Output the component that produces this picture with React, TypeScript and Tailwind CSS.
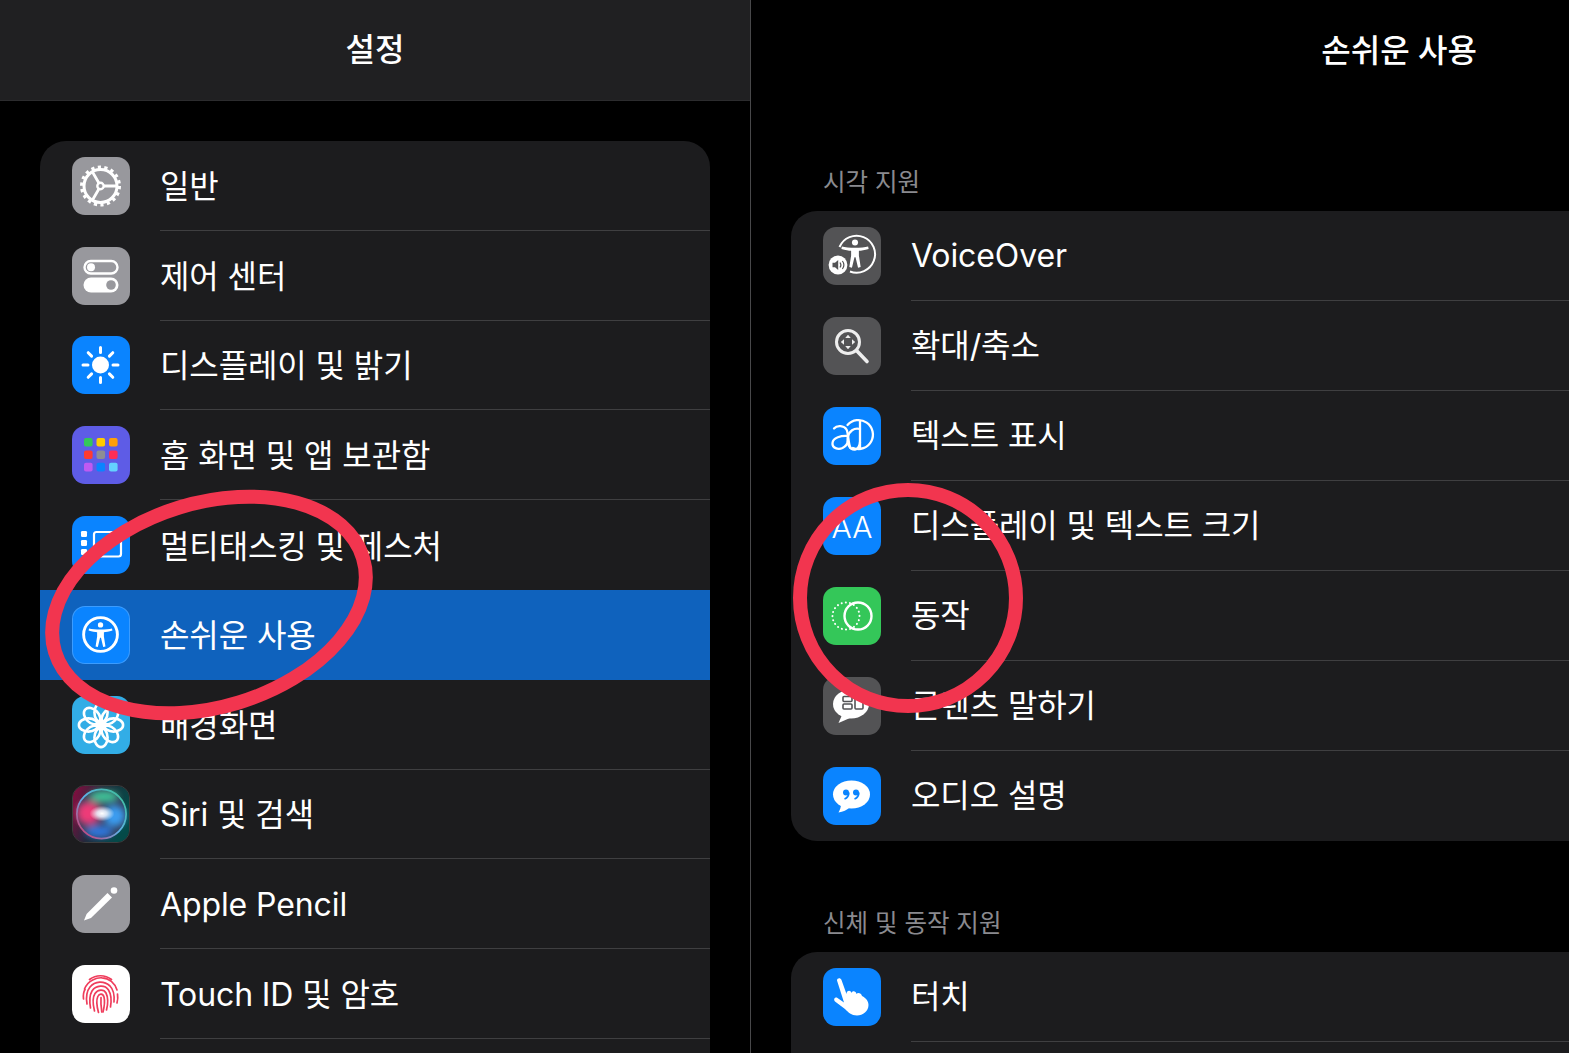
import type { ReactNode } from "react";

const KR = "font-['Inter','Noto_Sans_CJK_KR',sans-serif]";

function Tile({ bg, children, ring }: { bg: string; children: ReactNode; ring?: boolean }) {
  return (
    <div className={`w-[58px] h-[58px] rounded-[13px] overflow-hidden shrink-0 ${bg} ${ring ? "border border-white/20" : ""}`}>
      <svg viewBox="0 0 58 58" className="w-full h-full block">{children}</svg>
    </div>
  );
}

function Person({ x = 29, y = 29, s = 1 }: { x?: number; y?: number; s?: number }) {
  return (
    <g transform={`translate(${x} ${y}) scale(${s})`} fill="#fff">
      <circle cx="0" cy="-11" r="2.9" />
      <path d="M-12.5 -7.2 C-7 -5.6 7 -5.6 12.5 -7.2 L13 -4.8 C9 -3.6 6 -3.2 3.7 -3 L3.7 1.5 L5.4 12.5 L2.9 13 L0.5 3 L-0.5 3 L-2.9 13 L-5.4 12.5 L-3.7 1.5 L-3.7 -3 C-6 -3.2 -9 -3.6 -13 -4.8 Z" />
    </g>
  );
}

const GeneralIcon = () => (
  <Tile bg="bg-[#98989d]">
    <circle cx="28.5" cy="29" r="16.5" fill="none" stroke="#fff" strokeWidth="3" />
    <circle cx="28.5" cy="29" r="18.8" fill="none" stroke="#fff" strokeWidth="3.4" strokeDasharray="3.2 3.36" />
    <circle cx="28.5" cy="29" r="3.2" fill="none" stroke="#fff" strokeWidth="2.4" />
    <path d="M31.7 29H45M27 26.2 20.5 15M27 31.8 20.5 43" stroke="#fff" strokeWidth="2.8" fill="none" />
  </Tile>
);

const ControlIcon = () => (
  <Tile bg="bg-[#98989d]">
    <rect x="12.5" y="14" width="33" height="12.5" rx="6.25" fill="none" stroke="#fff" strokeWidth="2.4" />
    <circle cx="19" cy="20.2" r="4" fill="#fff" />
    <rect x="11.5" y="30.5" width="35" height="15" rx="7.5" fill="#fff" />
    <circle cx="39" cy="38" r="4.8" fill="#98989d" />
  </Tile>
);

const DisplayIcon = () => (
  <Tile bg="bg-[#0a84ff]">
    <circle cx="28.5" cy="29" r="8.5" fill="#fff" />
    <path
      d="M28.5 11.5v5M28.5 41.5v5M11 29h5M41 29h5M16.2 16.7l3.4 3.4M37.4 37.9l3.4 3.4M16.2 41.3l3.4-3.4M37.4 20.1l3.4-3.4"
      stroke="#fff"
      strokeWidth="3"
      strokeLinecap="round"
    />
  </Tile>
);

const HomeIcon = () => {
  const colors = ["#34c759", "#ffcc00", "#ff9f0a", "#ff3b30", "#8e8e93", "#ff2d55", "#bf5af2", "#0a84ff", "#64d2ff"];
  return (
    <Tile bg="bg-[#5e5ce6]">
      {colors.map((c, i) => (
        <rect key={c} x={12 + (i % 3) * 12.5} y={12 + Math.floor(i / 3) * 12.4} width="8.6" height="8.6" rx="2" fill={c} />
      ))}
    </Tile>
  );
};

const MultitaskIcon = () => (
  <Tile bg="bg-[#0a84ff]">
    <rect x="9" y="15" width="6" height="6" rx="1.2" fill="#fff" />
    <rect x="9" y="24" width="6" height="6" rx="1.2" fill="#fff" />
    <rect x="9" y="33" width="6" height="6" rx="1.2" fill="#fff" />
    <rect x="22" y="16" width="27" height="24.5" rx="2.5" fill="none" stroke="#fff" strokeWidth="2.2" />
  </Tile>
);

const AccessIcon = () => (
  <Tile bg="bg-[#0a84ff]" ring>
    <circle cx="28.5" cy="28.5" r="17.5" fill="none" stroke="#fff" strokeWidth="3" />
    <Person x={28.5} y={29} s={0.95} />
  </Tile>
);

const WallpaperIcon = () => (
  <Tile bg="bg-[#32ade6]">
    {[0, 45, 90, 135, 180, 225, 270, 315].map((a) => (
      <ellipse key={a} cx="29" cy="16.5" rx="6.6" ry="9.6" fill="none" stroke="#fff" strokeWidth="2.6" transform={`rotate(${a} 29 29)`} />
    ))}
    <circle cx="29" cy="29" r="3" fill="#fff" />
  </Tile>
);

const SiriIcon = () => (
  <div className="w-[58px] h-[58px] rounded-[13px] overflow-hidden shrink-0 border border-white/15">
    <svg viewBox="0 0 58 58" className="w-full h-full block">
      <defs>
        <linearGradient id="siriBg" x1="0" y1="0" x2="1" y2="0.35">
          <stop offset="0" stopColor="#8a0c40" />
          <stop offset="0.5" stopColor="#23283a" />
          <stop offset="1" stopColor="#044a48" />
        </linearGradient>
        <linearGradient id="siriRing" x1="0" y1="1" x2="1" y2="0">
          <stop offset="0" stopColor="#e0285f" />
          <stop offset="0.5" stopColor="#5fb0e8" />
          <stop offset="1" stopColor="#39c28f" />
        </linearGradient>
        <radialGradient id="siriGlow">
          <stop offset="0" stopColor="#fff" />
          <stop offset="0.4" stopColor="#eef6ff" stopOpacity="0.85" />
          <stop offset="1" stopColor="#fff" stopOpacity="0" />
        </radialGradient>
        <filter id="siriBlur"><feGaussianBlur stdDeviation="4" /></filter>
      </defs>
      <rect width="58" height="58" fill="url(#siriBg)" />
      <circle cx="29.5" cy="29" r="26" fill="#33405c" />
      <g filter="url(#siriBlur)">
        <ellipse cx="16" cy="28" rx="12" ry="12" fill="#ee3a78" />
        <ellipse cx="43" cy="31" rx="11" ry="11" fill="#3a9cf0" />
        <ellipse cx="32" cy="11" rx="15" ry="6" fill="#3fc498" />
        <ellipse cx="27" cy="47" rx="14" ry="6" fill="#2f78e0" />
      </g>
      <circle cx="29.5" cy="29" r="25.5" fill="none" stroke="url(#siriRing)" strokeWidth="1.8" />
      <ellipse cx="30" cy="28.5" rx="13" ry="8" fill="url(#siriGlow)" />
    </svg>
  </div>
);

const PencilIcon = () => (
  <Tile bg="bg-[#98989d]">
    <path d="M12 45.5 14.6 39 35.5 18 40 22.5 19 43Z" fill="#fff" />
    <circle cx="42" cy="15.5" r="3.3" fill="#fff" />
  </Tile>
);

const TouchIdIcon = () => (
  <Tile bg="bg-white">
    <g fill="none" stroke="#ef3d5c" strokeWidth="1.7" strokeLinecap="round" transform="translate(0 1)">
      <path d="M17.5 13.5C24 8.5 33 8.5 39.5 13.5" />
      <path d="M12.5 23C16 14 25 11.5 30 11.8 37 12 43 17 45 24" />
      <path d="M11.5 33C11 29 11.5 26 13 23.5M45.5 28C46 31 45.8 34 45 37" />
      <path d="M15 38C14 32 14 26 18 21 23 15 32 14.5 38 20 42 24 42.5 30 42 36" />
      <path d="M18.5 42C17.5 36 17 30 20 25 24 19 33 18.5 36.5 24 39 28 39.5 35 38.5 41" />
      <path d="M22.5 45C21 39 20 32 23 27.5 26 23 32 23 34 27 36 31 36 38 34.5 44" />
      <path d="M26.5 46.5C25 41 23.8 35 25.8 30.5 27.5 27 31 27.5 32 31 33 35 32.5 40 31 46" />
      <path d="M29 31.5C28.6 37 29 41 29.8 46" />
    </g>
  </Tile>
);

const VoiceOverIcon = () => (
  <Tile bg="bg-[#535355]">
    <path d="M16.5 20A18.5 18.5 0 1 1 27 44.5" fill="none" stroke="#fff" strokeWidth="2" />
    <Person x={32} y={27} s={1.05} />
    <circle cx="15" cy="38" r="9.4" fill="#fff" />
    <path d="M9.5 35.8h2.5l3.2-2.8v10l-3.2-2.8H9.5Z" fill="#535355" />
    <path d="M17 35.5c1.1 1.5 1.1 3.5 0 5M19.4 34c1.8 2.4 1.8 5.6 0 8" fill="none" stroke="#535355" strokeWidth="1.2" />
  </Tile>
);

const ZoomIcon = () => (
  <Tile bg="bg-[#535355]">
    <circle cx="25" cy="25" r="11.5" fill="none" stroke="#eee" strokeWidth="3" />
    <path d="M33.5 33.5 44 44.5" stroke="#eee" strokeWidth="3.6" strokeLinecap="round" />
    <path d="M25 17.8l2.8 3.2h-5.6ZM25 32.2l2.8-3.2h-5.6ZM17.8 25l3.2-2.8v5.6ZM32.2 25l-3.2-2.8v5.6Z" fill="#eee" />
  </Tile>
);

const TextIcon = () => (
  <Tile bg="bg-[#0a84ff]">
    <g fill="none" stroke="#fff" strokeWidth="2.3" strokeLinecap="round">
      <path d="M24.5 18A14.5 14.5 0 1 1 30 41" />
      <path d="M37 14V42" />
      <path d="M37 22C31 20.5 26 24 24.8 30 23.6 37 27 43 32 42.5 35 42 37 38.5 37 35" />
      <path d="M11 21.5C14 18 21 18.5 23.5 22.5 25.5 26 25 36 27.5 41" />
      <path d="M25 29C18 28.5 10 30.5 9.5 36 9 41 15 43 19.5 41 22.5 39.5 24.5 37 25 34" />
    </g>
  </Tile>
);

const FontIcon = () => (
  <div className="w-[58px] h-[58px] rounded-[13px] shrink-0 pt-[3px] bg-[#0a84ff] flex items-center justify-center text-white text-[30px] font-light font-['Inter',sans-serif]">
    AA
  </div>
);

const MotionIcon = () => (
  <Tile bg="bg-[#34c759]">
    <circle cx="23" cy="29" r="13.5" fill="none" stroke="#fff" strokeWidth="2" strokeLinecap="round" strokeDasharray="0.1 4.1" />
    <circle cx="35" cy="29" r="13.5" fill="none" stroke="#fff" strokeWidth="2.4" />
  </Tile>
);

const SpokenIcon = () => (
  <Tile bg="bg-[#535355]">
    <ellipse cx="28" cy="27" rx="18" ry="14.5" fill="#fff" />
    <path d="M19 38 15.5 46 27 41Z" fill="#fff" />
    <g fill="none" stroke="#535355" strokeWidth="1.6">
      <rect x="20" y="19.5" width="9" height="5" rx="1" />
      <rect x="20" y="27" width="9" height="5" rx="1" />
      <rect x="32" y="21" width="8" height="11" rx="1" />
    </g>
  </Tile>
);

const AudioIcon = () => (
  <Tile bg="bg-[#0a84ff]">
    <ellipse cx="28.5" cy="27.5" rx="18.5" ry="14" fill="#fff" />
    <path d="M18 37C18 40 17 43 15.5 45.5 20 45 24 43 26.5 40.5Z" fill="#fff" />
    <circle cx="23" cy="25.5" r="3" fill="#0a84ff" />
    <path d="M25.8 25.5C25.8 29 24 31 21.5 32" fill="none" stroke="#0a84ff" strokeWidth="1.8" />
    <circle cx="33" cy="25.5" r="3" fill="#0a84ff" />
    <path d="M35.8 25.5C35.8 29 34 31 31.5 32" fill="none" stroke="#0a84ff" strokeWidth="1.8" />
  </Tile>
);

const TouchIcon = () => (
  <Tile bg="bg-[#0a84ff]">
    <path
      d="M14 12.5C14 10 17.5 9.5 18.5 12L23.5 26C23.5 22.5 27.5 21.5 28.5 25 29 22.5 33 22.5 33.5 26 34.5 24 38.5 25 39 28 43 30 45.5 33 45.5 37 45.5 43 40 47.5 34 47.5 28.5 47.5 25 44 22 41L12 33.5C10 31.5 12 28.5 14.5 30L21 34.5Z"
      fill="#fff"
    />
  </Tile>
);

function Row({ icon, label, active, last, h, pad }: { icon: ReactNode; label: string; active?: boolean; last?: boolean; h: string; pad: string }) {
  return (
    <div className={`flex items-center pl-8 ${h} ${active ? "bg-[#0f62bd]" : ""}`}>
      {icon}
      <div className={`ml-[30px] flex-1 h-full flex items-center text-[32px] tracking-[-0.1px] text-white ${pad} ${last || active ? "" : "border-b border-[#3f3f41]"}`}>
        {label}
      </div>
    </div>
  );
}

const leftRows = [
  { icon: <GeneralIcon />, label: "일반" },
  { icon: <ControlIcon />, label: "제어 센터" },
  { icon: <DisplayIcon />, label: "디스플레이 및 밝기" },
  { icon: <HomeIcon />, label: "홈 화면 및 앱 보관함" },
  { icon: <MultitaskIcon />, label: "멀티태스킹 및 제스처", last: true },
  { icon: <AccessIcon />, label: "손쉬운 사용", active: true },
  { icon: <WallpaperIcon />, label: "배경화면" },
  { icon: <SiriIcon />, label: "Siri 및 검색" },
  { icon: <PencilIcon />, label: "Apple Pencil" },
  { icon: <TouchIdIcon />, label: "Touch ID 및 암호" },
];

const visionRows = [
  { icon: <VoiceOverIcon />, label: "VoiceOver" },
  { icon: <ZoomIcon />, label: "확대/축소" },
  { icon: <TextIcon />, label: "텍스트 표시" },
  { icon: <FontIcon />, label: "디스플레이 및 텍스트 크기" },
  { icon: <MotionIcon />, label: "동작" },
  { icon: <SpokenIcon />, label: "콘텐츠 말하기" },
  { icon: <AudioIcon />, label: "오디오 설명", last: true },
];

export default function App() {
  return (
    <div className={`relative flex w-full h-[1053px] overflow-hidden bg-black ${KR}`}>
      {/* sidebar */}
      <div className="w-[751px] shrink-0 border-r border-[#48484a]">
        <div className="h-[101px] bg-[#202022] border-b border-[#2c2c2e] flex items-center justify-center text-white text-[32px] font-medium">설정</div>
        <div className="mx-10 mt-10 bg-[#1c1c1e] rounded-t-[26px] overflow-hidden pb-20">
          {leftRows.map((r) => (
            <Row key={r.label} h="h-[89.8px]" pad="pt-[3px]" {...r} />
          ))}
        </div>
      </div>

      {/* detail */}
      <div className="flex-1 min-w-0">
        <div className="h-[101px] flex items-center justify-end pr-[92px] text-white text-[32px] font-medium">손쉬운 사용</div>
        <div className="h-[110px] flex items-end pl-[72px] pb-[12px] text-[24.5px] leading-[34px] text-[#8a8a8f]">시각 지원</div>
        <div className="ml-10 bg-[#1c1c1e] rounded-l-[26px]">
          {visionRows.map((r) => (
            <Row key={r.label} h="h-[90px]" pad="pt-0" {...r} />
          ))}
        </div>
        <div className="h-[111px] flex items-end pl-[72px] pb-[12px] text-[24.5px] leading-[34px] text-[#8a8a8f]">신체 및 동작 지원</div>
        <div className="ml-10 bg-[#1c1c1e] rounded-tl-[26px] pb-20">
          <Row h="h-[90px]" pad="pt-0" icon={<TouchIcon />} label="터치" />
        </div>
      </div>

      {/* red marker circles drawn over the screenshot */}
      <svg className="absolute inset-0 w-[1569px] h-[1053px] pointer-events-none" viewBox="0 0 1569 1053">
        <ellipse cx="209" cy="605" rx="161" ry="102" transform="rotate(-17 209 605)" fill="none" stroke="#f2354f" strokeWidth="14" />
        <circle cx="908" cy="598" r="108" fill="none" stroke="#f2354f" strokeWidth="14" />
      </svg>
    </div>
  );
}
